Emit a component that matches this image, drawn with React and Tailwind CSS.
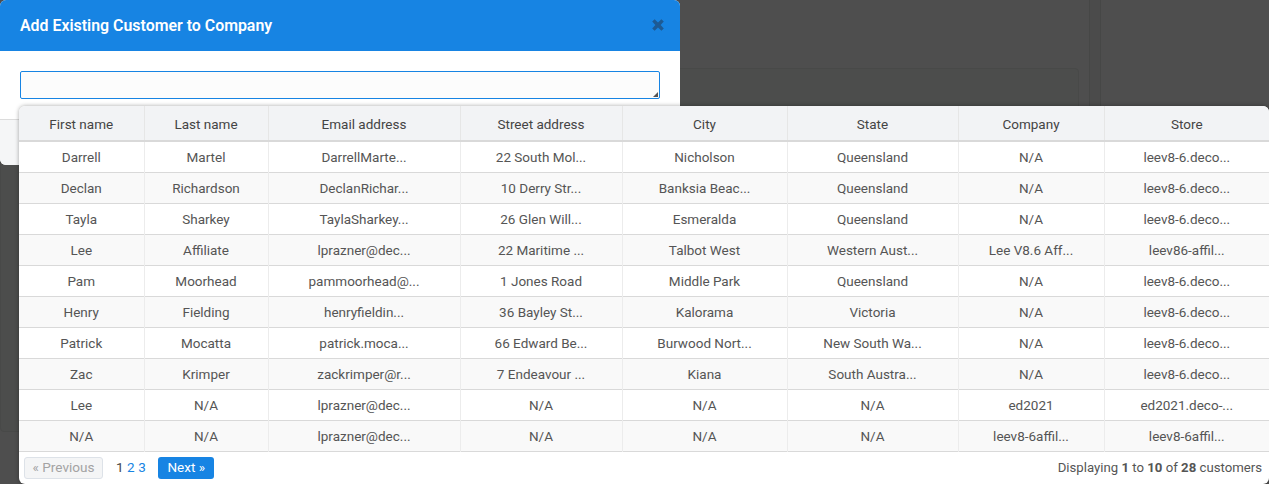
const cols = [
  ["First name", 125],
  ["Last name", 124],
  ["Email address", 192],
  ["Street address", 162],
  ["City", 165],
  ["State", 171],
  ["Company", 146],
  ["Store", 165],
];
const rows = [
  ["Darrell","Martel","DarrellMarte...","22 South Mol...","Nicholson","Queensland","N/A","leev8-6.deco..."],
  ["Declan","Richardson","DeclanRichar...","10 Derry Str...","Banksia Beac...","Queensland","N/A","leev8-6.deco..."],
  ["Tayla","Sharkey","TaylaSharkey...","26 Glen Will...","Esmeralda","Queensland","N/A","leev8-6.deco..."],
  ["Lee","Affiliate","lprazner@dec...","22 Maritime ...","Talbot West","Western Aust...","Lee V8.6 Aff...","leev86-affil..."],
  ["Pam","Moorhead","pammoorhead@...","1 Jones Road","Middle Park","Queensland","N/A","leev8-6.deco..."],
  ["Henry","Fielding","henryfieldin...","36 Bayley St...","Kalorama","Victoria","N/A","leev8-6.deco..."],
  ["Patrick","Mocatta","patrick.moca...","66 Edward Be...","Burwood Nort...","New South Wa...","N/A","leev8-6.deco..."],
  ["Zac","Krimper","zackrimper@r...","7 Endeavour ...","Kiana","South Austra...","N/A","leev8-6.deco..."],
  ["Lee","N/A","lprazner@dec...","N/A","N/A","N/A","ed2021","ed2021.deco-..."],
  ["N/A","N/A","lprazner@dec...","N/A","N/A","N/A","leev8-6affil...","leev8-6affil..."],
];

export default function App() {
  return (
    <div className="relative h-[484px] w-[1269px] overflow-hidden bg-[#4e4e4e] font-['Roboto',sans-serif] text-[13.5px]">
      {/* dimmed page behind the modal */}
      <div className="absolute left-0 top-[68px] h-[364px] w-[1079px] rounded border border-[#484948] bg-[#4c4d4c]" />
      <div className="absolute left-[1089px] top-0 h-full w-[12px] border-x border-[#464746] bg-[#4b4b4b]" />

      {/* modal */}
      <div className="absolute left-0 top-0 w-[680px] overflow-hidden rounded-md bg-white">
        <div className="flex h-[51px] items-center justify-between bg-[#1784e3] pl-5 pr-[16px]">
          <h2 className="pt-[1px] text-[15.9px] font-semibold text-white">Add Existing Customer to Company</h2>
          <svg width="12" height="12" viewBox="0 0 12 12" className="mb-[1px]">
            <path d="M2.6 0.2 L6 3.4 L9.4 0.2 L11.8 2.6 L8.6 6 L11.8 9.4 L9.4 11.8 L6 8.6 L2.6 11.8 L0.2 9.4 L3.4 6 L0.2 2.6 Z" fill="#1d5a94" />
          </svg>
        </div>
        <div className="h-[68px] px-5 pt-5">
          <div className="relative h-[28px] w-[640px] rounded-[2px] border border-[#1784e3] bg-[#fcfcfc]">
            <svg width="5" height="5" viewBox="0 0 5 5" className="absolute bottom-[1px] right-[1px]">
              <path d="M5 0 V5 H0 Z" fill="#555" />
            </svg>
          </div>
        </div>
        <div className="h-[46px] border-t border-[#dcdcdc] bg-[#f5f6f7]" />
      </div>

      {/* customer picker */}
      <div className="absolute left-[19px] top-[106px] w-[1250px] overflow-hidden rounded-md bg-white shadow-[0_0_4px_rgba(0,0,0,0.35)]">
        <table className="w-full table-fixed border-collapse text-center">
          <colgroup>
            {cols.map(([name, w]) => <col key={name} style={{ width: w }} />)}
          </colgroup>
          <thead>
            <tr className="h-[35px] border-b-2 border-[#d9d9d9] bg-[#f2f3f5] text-[#444]">
              {cols.map(([name]) => (
                <th key={name} className="border-r border-[#e6e6e6] p-0 pt-[3px] font-normal last:border-r-0">{name}</th>
              ))}
            </tr>
          </thead>
          <tbody>
            {rows.map((r, i) => (
              <tr key={i} className={`h-[31px] border-b border-[#d9d9d9] text-[#555] first:[&>td]:pt-0 ${i % 2 ? "bg-[#f9f9f9]" : "bg-white"}`}>
                {r.map((c, j) => (
                  <td key={j} className="border-r border-[#ececec] p-0 pt-[2px] last:border-r-0">{c}</td>
                ))}
              </tr>
            ))}
          </tbody>
        </table>
        <div className="flex h-[32px] items-center justify-between pl-[5px] pr-[7px]">
          <div className="flex items-center">
            <span className="flex h-[22px] w-[79px] items-center justify-center rounded-[3px] border border-[#dde2e8] bg-[#f4f5f6] text-[13.6px] text-[#a3a3a3]">« Previous</span>
            <span className="ml-[13px] text-[#444]">1</span>
            <span className="ml-[3.5px] text-[#1784e3]">2</span>
            <span className="ml-[3.5px] text-[#1784e3]">3</span>
            <span className="ml-[12.5px] flex h-[22px] w-[56px] items-center justify-center rounded-[3px] bg-[#1784e3] text-white">Next »</span>
          </div>
          <span className="text-[13.2px] text-[#555]">Displaying <b className="font-bold">1</b> to <b className="font-bold">10</b> of <b className="font-bold">28</b> customers</span>
        </div>
      </div>
    </div>
  );
}
